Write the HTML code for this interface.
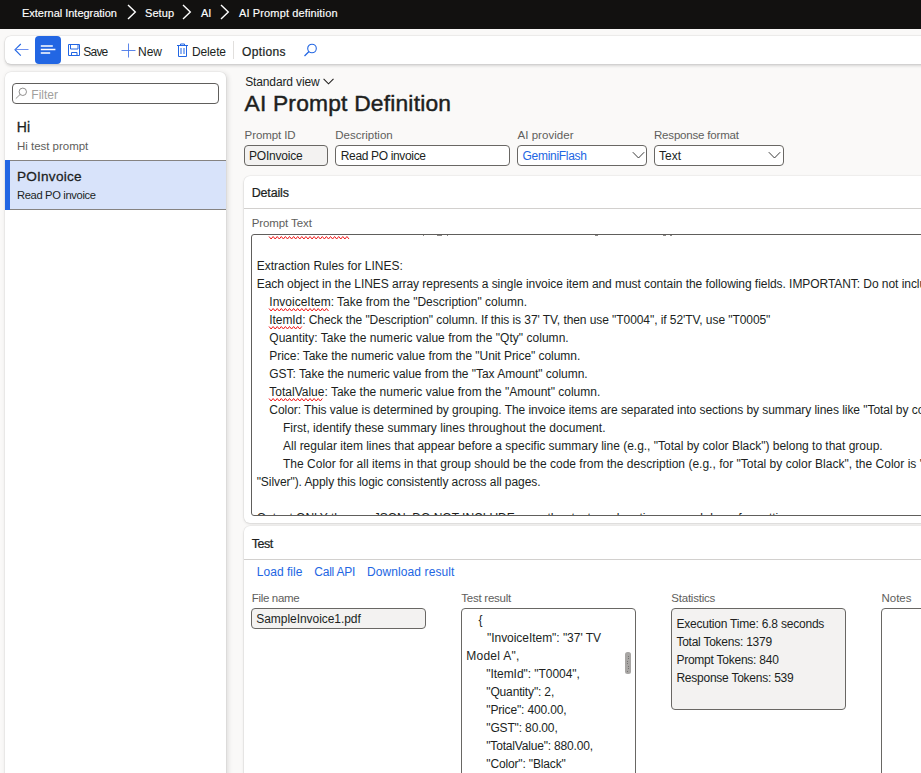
<!DOCTYPE html>
<html><head><meta charset="utf-8"><title>AI Prompt Definition</title>
<style>
html,body{margin:0;padding:0}
body{width:921px;height:773px;overflow:hidden;position:relative;background:#faf9f8;font-family:"Liberation Sans",sans-serif}
.t{position:absolute;white-space:pre;line-height:1}
svg{overflow:visible}
</style></head><body>
<div style="position:absolute;left:0px;top:0px;width:921px;height:29px;background:#121110"></div>
<div class="t" style="left:22px;top:7.69px;font-size:11px;color:#fff;letter-spacing:-0.021px;-webkit-text-stroke:0.15px currentColor;">External Integration</div>
<div class="t" style="left:145px;top:7.69px;font-size:11px;color:#fff;letter-spacing:0.062px;-webkit-text-stroke:0.15px currentColor;">Setup</div>
<div class="t" style="left:201px;top:7.69px;font-size:11px;color:#fff;-webkit-text-stroke:0.15px currentColor;">AI</div>
<div class="t" style="left:239px;top:7.69px;font-size:11px;color:#fff;letter-spacing:0.132px;-webkit-text-stroke:0.15px currentColor;">AI Prompt definition</div>
<svg style="position:absolute;left:127px;top:4px" width="11" height="16"><polyline points="1,1 8.3,8 1,15" fill="none" stroke="#fff" stroke-width="1.4"/></svg>
<svg style="position:absolute;left:182px;top:4px" width="11" height="16"><polyline points="1,1 8.3,8 1,15" fill="none" stroke="#fff" stroke-width="1.4"/></svg>
<svg style="position:absolute;left:220px;top:4px" width="11" height="16"><polyline points="1,1 8.3,8 1,15" fill="none" stroke="#fff" stroke-width="1.4"/></svg>
<div style="position:absolute;left:5px;top:36px;width:930px;height:28px;background:#fff;border-radius:6px;box-shadow:0 0 0 0.6px rgba(0,0,0,0.07),0 1.5px 3px rgba(0,0,0,0.15)"></div>
<svg style="position:absolute;left:13px;top:42px" width="18" height="16"><path d="M7.8 2 L2 7.7 L7.8 13.6" fill="none" stroke="#2266e3" stroke-width="1.1"/><path d="M2.5 7.5 H15.5" stroke="#6d8ff0" stroke-width="1"/></svg>
<div style="position:absolute;left:35px;top:36px;width:26px;height:28px;background:#2266e3;border-radius:4px"></div>
<svg style="position:absolute;left:35px;top:36px" width="26" height="28"><path d="M5.8 10 H17.8 M5.8 13.5 H20.4 M5.8 17 H15.2" stroke="#fff" stroke-width="1.3"/></svg>
<svg style="position:absolute;left:68px;top:44px" width="13" height="12"><path d="M0.5 0.5 H11.5 V11.5 H0.5 Z" fill="none" stroke="#2266e3" stroke-width="1"/><path d="M2.5 0.5 V5 H10 V0.5 M3.5 11.5 V8.5 H9 V11.5" fill="none" stroke="#2266e3" stroke-width="1"/></svg>
<div class="t" style="left:83.3px;top:45.64px;font-size:12px;color:#201f1e;letter-spacing:-0.786px;">Save</div>
<svg style="position:absolute;left:121px;top:43px" width="15" height="15"><path d="M7.5 0.5 V14.5 M0.5 7.5 H14.5" stroke="#4a78e8" stroke-width="0.9"/></svg>
<div class="t" style="left:138px;top:45.64px;font-size:12px;color:#201f1e;letter-spacing:-0.008px;">New</div>
<svg style="position:absolute;left:176px;top:43px" width="13" height="15"><path d="M1 2.5 H12 M4.5 2.5 V1 H8.5 V2.5 M2.5 2.5 V13.5 H10.5 V2.5 M5 5 V11 M8 5 V11" fill="none" stroke="#2266e3" stroke-width="1"/></svg>
<div class="t" style="left:192px;top:45.64px;font-size:12px;color:#201f1e;letter-spacing:-0.138px;">Delete</div>
<div style="position:absolute;left:233px;top:41px;width:1px;height:18px;background:#e1dfdd"></div>
<div class="t" style="left:242px;top:45.64px;font-size:12px;color:#201f1e;letter-spacing:0.357px;-webkit-text-stroke:0.225px currentColor;">Options</div>
<svg style="position:absolute;left:303px;top:43px" width="15" height="15"><circle cx="9" cy="5.5" r="4.3" fill="none" stroke="#2266e3" stroke-width="1.1"/><path d="M6 8.5 L1.5 13" stroke="#2266e3" stroke-width="1.2"/></svg>
<div style="position:absolute;left:5px;top:72px;width:221px;height:720px;background:#fff;border-radius:6px 6px 0 0;box-shadow:0 0 0 0.6px rgba(0,0,0,0.06),1.5px 1px 5px rgba(0,0,0,0.12)"></div>
<div style="position:absolute;left:12px;top:83px;width:207px;height:21px;box-sizing:border-box;border:1px solid #605e5c;border-radius:4px;background:#fff"></div>
<svg style="position:absolute;left:15px;top:87px" width="13" height="13"><circle cx="7.8" cy="4.8" r="3.7" fill="none" stroke="#858381" stroke-width="0.9"/><path d="M5.2 7.4 L0.8 11.6" stroke="#858381" stroke-width="0.9"/></svg>
<div class="t" style="left:31.3px;top:88.84px;font-size:12px;color:#a19f9d;letter-spacing:0.006px;">Filter</div>
<div class="t" style="left:16.8px;top:120.45px;font-size:14px;color:#201f1e;letter-spacing:0.2px;-webkit-text-stroke:0.275px currentColor;">Hi</div>
<div class="t" style="left:17px;top:141.27px;font-size:11.5px;color:#605e5c;letter-spacing:-0.021px;">Hi test prompt</div>
<div style="position:absolute;left:5px;top:160px;width:221px;height:50px;box-sizing:border-box;background:#d8e3fa;border-top:1px solid #858381;border-bottom:1px solid #858381"></div>
<div style="position:absolute;left:5px;top:160px;width:5px;height:50px;background:#2266e3"></div>
<div class="t" style="left:17px;top:169.69px;font-size:13.6px;color:#201f1e;letter-spacing:0.223px;-webkit-text-stroke:0.275px currentColor;">POInvoice</div>
<div class="t" style="left:17px;top:190.32px;font-size:11.2px;color:#201f1e;letter-spacing:-0.354px;">Read PO invoice</div>
<div class="t" style="left:245.2px;top:75.84px;font-size:12px;color:#201f1e;letter-spacing:-0.129px;">Standard view</div>
<svg style="position:absolute;left:323px;top:77.5px" width="11" height="8"><polyline points="0.6,0.8 5.5,5.8 10.5,0.8" fill="none" stroke="#201f1e" stroke-width="1.05"/></svg>
<div class="t" style="left:244.5px;top:92.10px;font-size:22.8px;color:#201f1e;letter-spacing:0.198px;-webkit-text-stroke:0.45px currentColor;">AI Prompt Definition</div>
<div class="t" style="left:244.6px;top:129.57px;font-size:11.5px;color:#605e5c;letter-spacing:-0.096px;">Prompt ID</div>
<div class="t" style="left:335.3px;top:129.57px;font-size:11.5px;color:#605e5c;letter-spacing:-0.013px;">Description</div>
<div class="t" style="left:517.5px;top:129.57px;font-size:11.5px;color:#605e5c;letter-spacing:0.039px;">AI provider</div>
<div class="t" style="left:654px;top:129.57px;font-size:11.5px;color:#605e5c;letter-spacing:-0.184px;">Response format</div>
<div style="position:absolute;left:244px;top:145px;width:84px;height:21px;box-sizing:border-box;border:1px solid #696764;border-radius:4px;background:#f3f2f1"></div>
<div class="t" style="left:249px;top:149.84px;font-size:12px;color:#201f1e;letter-spacing:-0.207px;">POInvoice</div>
<div style="position:absolute;left:335px;top:145px;width:175px;height:21px;box-sizing:border-box;border:1px solid #696764;border-radius:4px;background:#fff"></div>
<div class="t" style="left:340.8px;top:149.84px;font-size:12px;color:#201f1e;letter-spacing:-0.346px;">Read PO invoice</div>
<div style="position:absolute;left:517px;top:145px;width:130px;height:21px;box-sizing:border-box;border:1px solid #696764;border-radius:4px;background:#fff"></div>
<div class="t" style="left:522.5px;top:149.84px;font-size:12px;color:#2266e3;letter-spacing:-0.286px;">GeminiFlash</div>
<div style="position:absolute;left:654px;top:145px;width:130px;height:21px;box-sizing:border-box;border:1px solid #696764;border-radius:4px;background:#fff"></div>
<div class="t" style="left:659px;top:149.84px;font-size:12px;color:#201f1e;letter-spacing:-0.005px;">Text</div>
<svg style="position:absolute;left:632px;top:151px" width="13" height="9"><polyline points="0.8,1.2 6.5,7 12.2,1.2" fill="none" stroke="#323130" stroke-width="0.95"/></svg>
<svg style="position:absolute;left:768px;top:151px" width="13" height="9"><polyline points="0.8,1.2 6.5,7 12.2,1.2" fill="none" stroke="#323130" stroke-width="0.95"/></svg>
<div style="position:absolute;left:244px;top:176px;width:700px;height:347px;background:#fff;border-radius:6px;box-shadow:0 0 0 0.6px rgba(0,0,0,0.06),0 1px 3px rgba(0,0,0,0.12)"></div>
<div class="t" style="left:251.7px;top:186.62px;font-size:12.5px;color:#201f1e;letter-spacing:-0.17px;-webkit-text-stroke:0.225px currentColor;">Details</div>
<div style="position:absolute;left:244px;top:208px;width:700px;height:1px;background:#d2d0ce"></div>
<div class="t" style="left:251.7px;top:218.27px;font-size:11.5px;color:#605e5c;letter-spacing:-0.096px;">Prompt Text</div>
<div style="position:absolute;left:251px;top:234px;width:700px;height:282px;box-sizing:border-box;border:1px solid #605e5c;border-radius:3px;overflow:hidden;background:#fff">
<div class="t" style="left:4.699999999999989px;top:25.14px;font-size:12px;color:#201f1e;letter-spacing:0px;">Extraction Rules for LINES:</div>
<div class="t" style="left:4.699999999999989px;top:43.14px;font-size:12px;color:#201f1e;letter-spacing:-0.057px;">Each object in the LINES array represents a single invoice item and must contain the following fields. IMPORTANT: Do not include</div>
<div class="t" style="left:17.30000000000001px;top:61.14px;font-size:12px;color:#201f1e;letter-spacing:0px;">InvoiceItem: Take from the "Description" column.</div>
<div class="t" style="left:17.30000000000001px;top:79.14px;font-size:12px;color:#201f1e;letter-spacing:-0.071px;">ItemId: Check the "Description" column. If this is 37' TV, then use "T0004", if 52'TV, use "T0005"</div>
<div class="t" style="left:17.30000000000001px;top:97.14px;font-size:12px;color:#201f1e;letter-spacing:0.03px;">Quantity: Take the numeric value from the "Qty" column.</div>
<div class="t" style="left:17.30000000000001px;top:115.14px;font-size:12px;color:#201f1e;letter-spacing:-0.048px;">Price: Take the numeric value from the "Unit Price" column.</div>
<div class="t" style="left:17.30000000000001px;top:133.14px;font-size:12px;color:#201f1e;letter-spacing:-0.037px;">GST: Take the numeric value from the "Tax Amount" column.</div>
<div class="t" style="left:17.30000000000001px;top:151.14px;font-size:12px;color:#201f1e;letter-spacing:0.001px;">TotalValue: Take the numeric value from the "Amount" column.</div>
<div class="t" style="left:17.30000000000001px;top:169.14px;font-size:12px;color:#201f1e;letter-spacing:-0.052px;">Color: This value is determined by grouping. The invoice items are separated into sections by summary lines like "Total by color</div>
<div class="t" style="left:31px;top:187.14px;font-size:12px;color:#201f1e;letter-spacing:0.017px;">First, identify these summary lines throughout the document.</div>
<div class="t" style="left:31px;top:205.14px;font-size:12px;color:#201f1e;letter-spacing:-0.01px;">All regular item lines that appear before a specific summary line (e.g., "Total by color Black") belong to that group.</div>
<div class="t" style="left:31px;top:223.14px;font-size:12px;color:#201f1e;letter-spacing:0.015px;">The Color for all items in that group should be the code from the description (e.g., for "Total by color Black", the Color is "</div>
<div class="t" style="left:4.699999999999989px;top:241.14px;font-size:12px;color:#201f1e;letter-spacing:-0.073px;">"Silver"). Apply this logic consistently across all pages.</div>
<div class="t" style="left:4.699999999999989px;top:277.14px;font-size:12px;color:#201f1e;letter-spacing:0px;">Output ONLY the raw JSON. DO NOT INCLUDE any other text, explanation, or markdown formatting.</div>
</div>
<div style="position:absolute;left:244px;top:526px;width:700px;height:400px;background:#fff;border-radius:6px;box-shadow:0 0 0 0.6px rgba(0,0,0,0.06),0 1px 3px rgba(0,0,0,0.12)"></div>
<div class="t" style="left:251.7px;top:537.92px;font-size:12.5px;color:#201f1e;letter-spacing:-0.446px;-webkit-text-stroke:0.225px currentColor;">Test</div>
<div style="position:absolute;left:244px;top:559px;width:700px;height:1px;background:#d2d0ce"></div>
<div class="t" style="left:256.8px;top:566.34px;font-size:12px;color:#2266e3;letter-spacing:0.028px;">Load file</div>
<div class="t" style="left:314.3px;top:566.34px;font-size:12px;color:#2266e3;letter-spacing:-0.241px;">Call API</div>
<div class="t" style="left:367px;top:566.34px;font-size:12px;color:#2266e3;letter-spacing:0.097px;">Download result</div>
<div class="t" style="left:251.7px;top:593.07px;font-size:11.5px;color:#605e5c;letter-spacing:-0.312px;">File name</div>
<div class="t" style="left:461.3px;top:593.07px;font-size:11.5px;color:#605e5c;letter-spacing:-0.242px;">Test result</div>
<div class="t" style="left:671.3px;top:593.07px;font-size:11.5px;color:#605e5c;letter-spacing:-0.224px;">Statistics</div>
<div class="t" style="left:881.5px;top:593.07px;font-size:11.5px;color:#605e5c;letter-spacing:-0.012px;">Notes</div>
<div style="position:absolute;left:251px;top:608px;width:175px;height:21px;box-sizing:border-box;border:1px solid #696764;border-radius:4px;background:#f3f2f1"></div>
<div class="t" style="left:256.3px;top:613.04px;font-size:12px;color:#201f1e;letter-spacing:-0.053px;">SampleInvoice1.pdf</div>
<div style="position:absolute;left:461px;top:608px;width:175px;height:200px;box-sizing:border-box;border:1px solid #696764;border-radius:4px;background:#fff"></div>
<div class="t" style="left:478.5px;top:614.34px;font-size:12px;color:#201f1e;letter-spacing:-0.15px;">{</div>
<div class="t" style="left:487px;top:632.24px;font-size:12px;color:#201f1e;letter-spacing:-0.043px;">"InvoiceItem": "37' TV</div>
<div class="t" style="left:466.2px;top:650.14px;font-size:12px;color:#201f1e;letter-spacing:0.268px;">Model A",</div>
<div class="t" style="left:486.3px;top:668.04px;font-size:12px;color:#201f1e;letter-spacing:-0.054px;">"ItemId": "T0004",</div>
<div class="t" style="left:486.3px;top:685.94px;font-size:12px;color:#201f1e;letter-spacing:-0.15px;">"Quantity": 2,</div>
<div class="t" style="left:486.3px;top:703.84px;font-size:12px;color:#201f1e;letter-spacing:-0.15px;">"Price": 400.00,</div>
<div class="t" style="left:486.3px;top:721.74px;font-size:12px;color:#201f1e;letter-spacing:-0.15px;">"GST": 80.00,</div>
<div class="t" style="left:486.3px;top:739.64px;font-size:12px;color:#201f1e;letter-spacing:-0.184px;">"TotalValue": 880.00,</div>
<div class="t" style="left:486.3px;top:757.54px;font-size:12px;color:#201f1e;letter-spacing:-0.15px;">"Color": "Black"</div>
<div style="position:absolute;left:625px;top:652px;width:6px;height:22px;background:#a8a6a4;border-radius:2.5px"></div>
<div style="position:absolute;left:628px;top:656px;width:1px;height:1px;background:#777573"></div>
<div style="position:absolute;left:628px;top:658px;width:1px;height:1px;background:#777573"></div>
<div style="position:absolute;left:627px;top:661px;width:1px;height:1px;background:#777573"></div>
<div style="position:absolute;left:627px;top:663px;width:1px;height:1px;background:#777573"></div>
<div style="position:absolute;left:628px;top:666px;width:1px;height:1px;background:#777573"></div>
<div style="position:absolute;left:628px;top:668px;width:1px;height:1px;background:#777573"></div>
<div style="position:absolute;left:627px;top:671px;width:1px;height:1px;background:#777573"></div>
<div style="position:absolute;left:671px;top:608px;width:175px;height:102px;box-sizing:border-box;border:1px solid #696764;border-radius:4px;background:#f3f2f1"></div>
<div class="t" style="left:676.4px;top:618.24px;font-size:12px;color:#201f1e;letter-spacing:-0.209px;">Execution Time: 6.8 seconds</div>
<div class="t" style="left:676.4px;top:636.24px;font-size:12px;color:#201f1e;letter-spacing:-0.24px;">Total Tokens: 1379</div>
<div class="t" style="left:676.4px;top:654.24px;font-size:12px;color:#201f1e;letter-spacing:-0.24px;">Prompt Tokens: 840</div>
<div class="t" style="left:676.4px;top:672.24px;font-size:12px;color:#201f1e;letter-spacing:-0.24px;">Response Tokens: 539</div>
<div style="position:absolute;left:881px;top:608px;width:100px;height:200px;box-sizing:border-box;border:1px solid #696764;border-radius:4px;background:#fff"></div>
<svg style="position:absolute;left:269px;top:235.5px" width="83" height="5"><polyline points="0.0,0.5 2.1,3 4.1,0.5 6.2,3 8.2,0.5 10.3,3 12.3,0.5 14.4,3 16.4,0.5 18.5,3 20.5,0.5 22.6,3 24.6,0.5 26.7,3 28.7,0.5 30.8,3 32.8,0.5 34.9,3 36.9,0.5 39.0,3 41.0,0.5 43.1,3 45.1,0.5 47.2,3 49.2,0.5 51.3,3 53.3,0.5 55.4,3 57.4,0.5 59.5,3 61.5,0.5 63.6,3 65.6,0.5 67.7,3 69.7,0.5 71.8,3 73.8,0.5 75.9,3 77.9,0.5 80.0,3" fill="none" stroke="#f01818" stroke-width="1"/></svg>
<svg style="position:absolute;left:269px;top:307.8px" width="63" height="5"><polyline points="0.0,0.5 2.1,3 4.1,0.5 6.2,3 8.2,0.5 10.3,3 12.3,0.5 14.4,3 16.4,0.5 18.5,3 20.5,0.5 22.6,3 24.6,0.5 26.7,3 28.7,0.5 30.8,3 32.8,0.5 34.9,3 36.9,0.5 39.0,3 41.0,0.5 43.1,3 45.1,0.5 47.2,3 49.2,0.5 51.3,3 53.3,0.5 55.4,3 57.4,0.5 59.5,3" fill="none" stroke="#f01818" stroke-width="1"/></svg>
<svg style="position:absolute;left:269px;top:325.8px" width="36" height="5"><polyline points="0.0,0.5 2.1,3 4.1,0.5 6.2,3 8.2,0.5 10.3,3 12.3,0.5 14.4,3 16.4,0.5 18.5,3 20.5,0.5 22.6,3 24.6,0.5 26.7,3 28.7,0.5 30.8,3 32.8,0.5" fill="none" stroke="#f01818" stroke-width="1"/></svg>
<svg style="position:absolute;left:269px;top:397.8px" width="56" height="5"><polyline points="0.0,0.5 2.1,3 4.1,0.5 6.2,3 8.2,0.5 10.3,3 12.3,0.5 14.4,3 16.4,0.5 18.5,3 20.5,0.5 22.6,3 24.6,0.5 26.7,3 28.7,0.5 30.8,3 32.8,0.5 34.9,3 36.9,0.5 39.0,3 41.0,0.5 43.1,3 45.1,0.5 47.2,3 49.2,0.5 51.3,3 53.3,0.5" fill="none" stroke="#f01818" stroke-width="1"/></svg>
<div style="position:absolute;left:423px;top:235px;width:1px;height:1px;background:#8a8886"></div>
<div style="position:absolute;left:437px;top:235px;width:5px;height:1px;background:#8a8886"></div>
<div style="position:absolute;left:447px;top:235px;width:1px;height:1px;background:#8a8886"></div>
<div style="position:absolute;left:595px;top:235px;width:3px;height:1px;background:#8a8886"></div>
<div style="position:absolute;left:663px;top:235px;width:3px;height:1px;background:#8a8886"></div>
<div style="position:absolute;left:670px;top:235px;width:2px;height:1px;background:#8a8886"></div>
</body></html>
